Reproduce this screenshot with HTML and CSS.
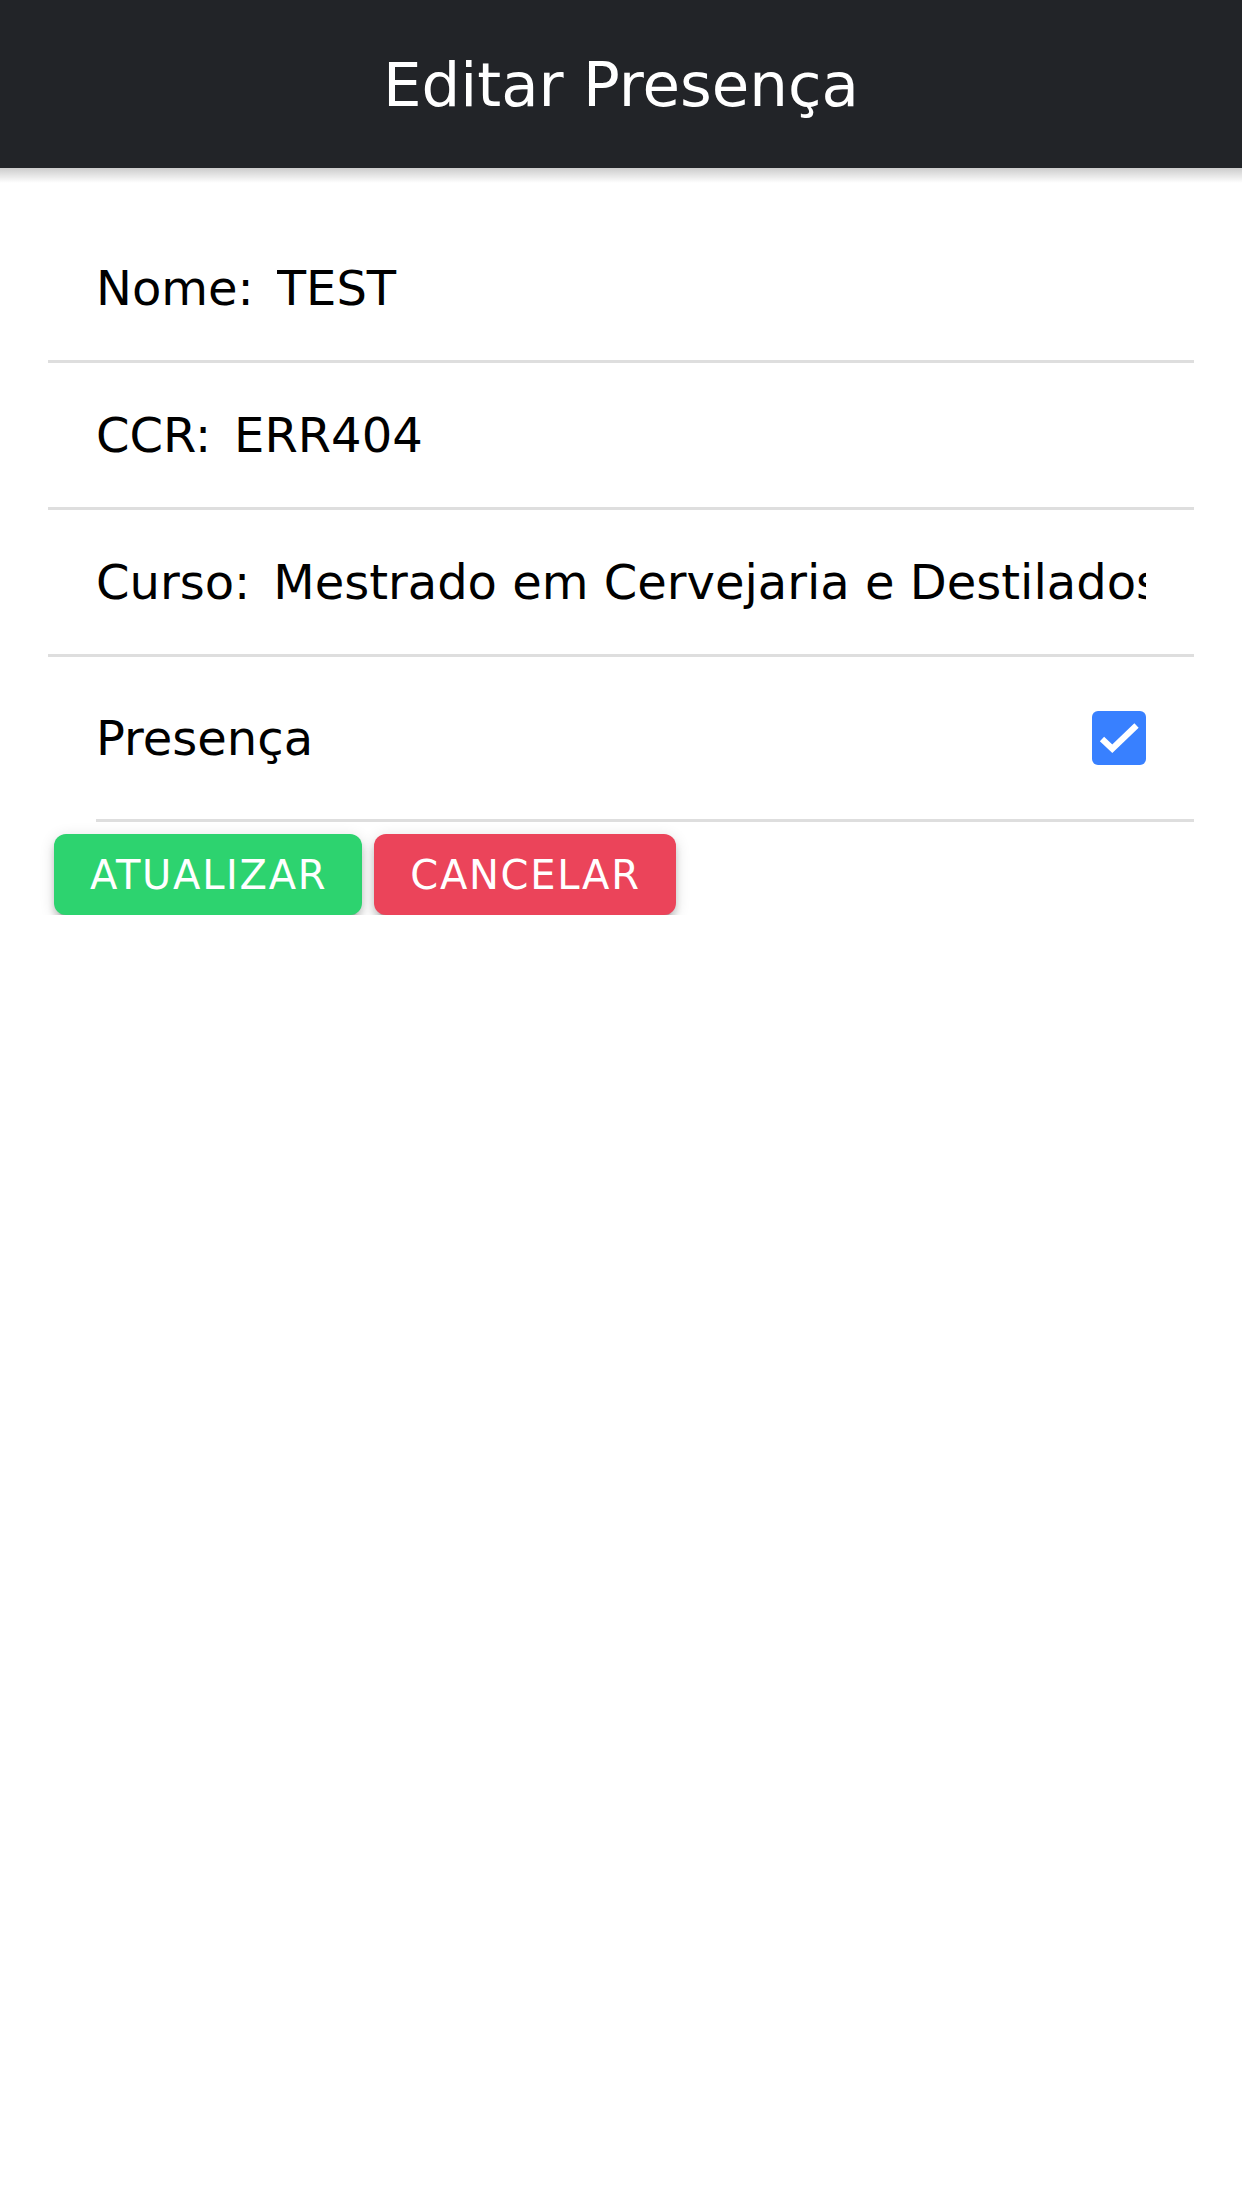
FILE: index.html
```html
<!DOCTYPE html>
<html lang="pt-BR">
<head>
<meta charset="utf-8">
<title>Editar Presença</title>
<link rel="stylesheet" href="styles.css">
</head>
<body>
<header class="toolbar">
  <h1 class="toolbar-title">Editar Presença</h1>
</header>
<main class="content">
  <div class="list">
    <div class="item">
      <span class="label">Nome:</span>
      <span class="value">TEST</span>
    </div>
    <div class="item">
      <span class="label">CCR:</span>
      <span class="value">ERR404</span>
    </div>
    <div class="item">
      <span class="label">Curso:</span>
      <span class="value">Mestrado em Cervejaria e Destilados</span>
    </div>
    <div class="item item-inset">
      <div class="item-inner">
        <span class="label">Presença</span>
        <svg class="checkbox" width="54" height="54" viewBox="0 0 54 54" aria-hidden="true">
          <rect x="0" y="0" width="54" height="54" rx="6" ry="6" fill="#3880ff"/>
          <path d="M10 28 L20.3 37.8 L44.5 14.5" fill="none" stroke="#ffffff" stroke-width="6.2"/>
        </svg>
      </div>
    </div>
  </div>
  <div class="actions">
    <button class="btn btn-success" type="button">ATUALIZAR</button>
    <button class="btn btn-danger" type="button">CANCELAR</button>
  </div>
</main>
</body>
</html>
```

FILE: styles.css
```css
html, body {
  margin: 0;
  padding: 0;
  background: #ffffff;
}

body {
  font-family: "DejaVu Sans", "Noto Sans", sans-serif;
  color: #000000;
}

.toolbar {
  position: relative;
  height: 168px;
  background: #222428;
  display: flex;
  align-items: center;
  justify-content: center;
}

.toolbar::after {
  content: "";
  position: absolute;
  left: 0;
  right: 0;
  top: 100%;
  height: 15px;
  background: linear-gradient(to bottom, rgba(0, 0, 0, 0.2), rgba(0, 0, 0, 0));
}

.toolbar-title {
  margin: 0;
  font-size: 61px;
  font-weight: normal;
  color: #ffffff;
  line-height: 1;
}

.content {
  padding: 48px 48px 0;
}

.list {
  display: flex;
  flex-direction: column;
}

.item {
  display: flex;
  align-items: center;
  height: 144px;
  padding: 0 48px;
  border-bottom: 3px solid #dedede;
  font-size: 48px;
  line-height: 1.3;
}

.label {
  margin-right: 23px;
  white-space: nowrap;
}

.value {
  flex: 1;
  min-width: 0;
  overflow: hidden;
  white-space: nowrap;
  padding: 4px 0;
}

.item-inset {
  height: auto;
  border-bottom: none;
  padding: 0 0 0 48px;
}

.item-inset .item-inner {
  flex: 1;
  display: flex;
  align-items: center;
  justify-content: space-between;
  height: 162px;
  padding-right: 48px;
  border-bottom: 3px solid #dedede;
}

.checkbox {
  display: block;
  flex: none;
}

.actions {
  display: flex;
  gap: 12px;
  padding: 12px 6px 0;
}

.btn {
  height: 81px;
  padding: 0 35px 0 36px;
  border: none;
  border-radius: 12px;
  font-family: "DejaVu Sans", "Noto Sans", sans-serif;
  font-size: 40px;
  letter-spacing: 1.7px;
  color: #ffffff;
  line-height: 1;
  box-shadow: 0 9px 3px -6px rgba(0, 0, 0, 0.2), 0 6px 6px 0 rgba(0, 0, 0, 0.16), 0 3px 15px 0 rgba(0, 0, 0, 0.14);
}

.btn-success {
  background: #2dd36f;
}

.btn-danger {
  background: #eb445a;
}
```
